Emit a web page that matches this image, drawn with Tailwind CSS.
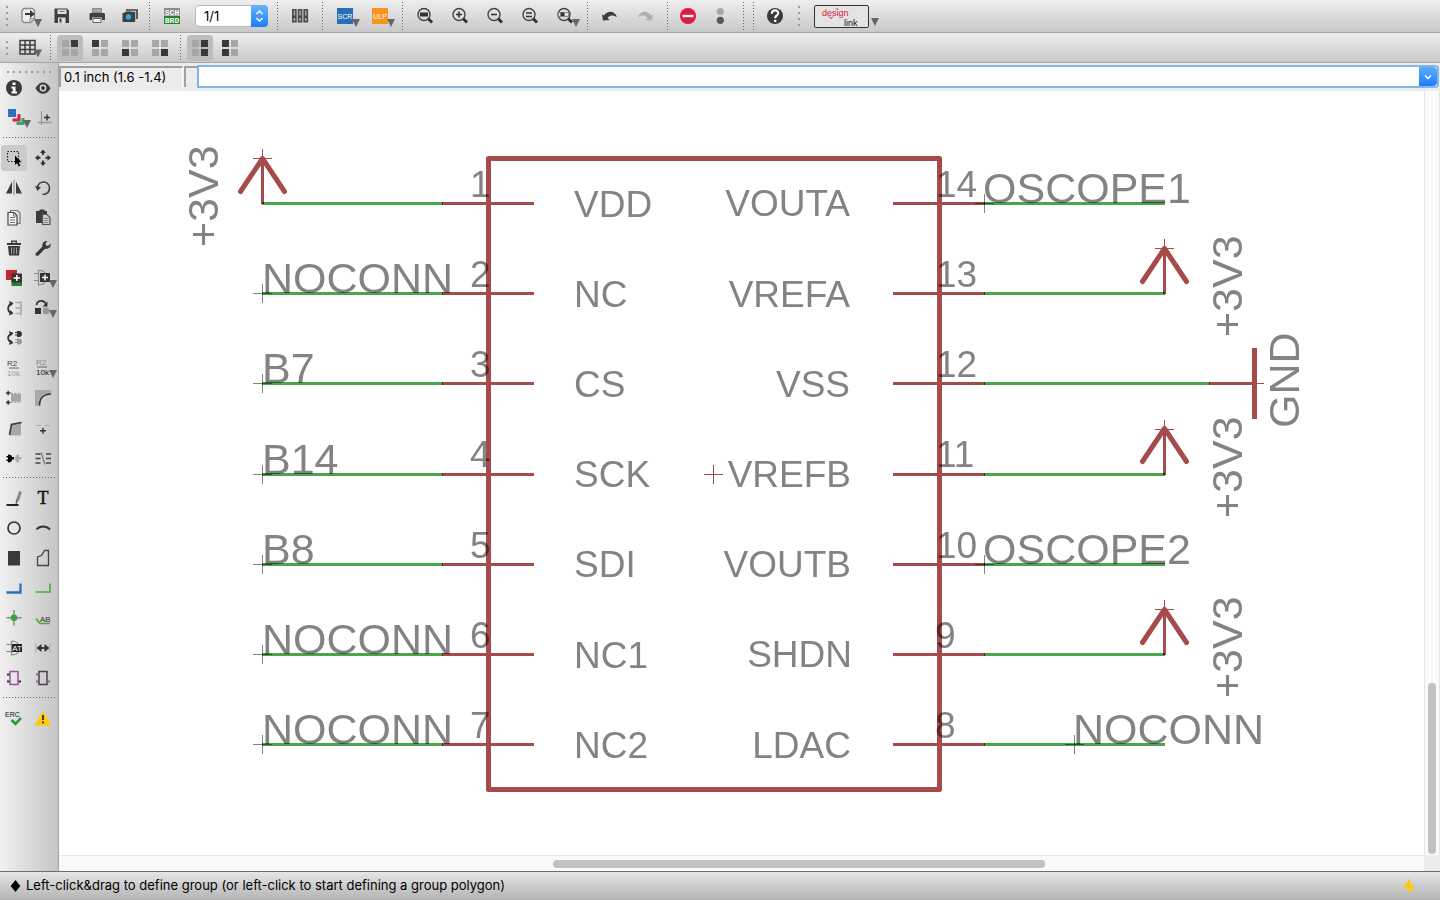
<!DOCTYPE html>
<html lang="en">
<head>
<meta charset="utf-8">
<title>Schematic editor</title>
<script src="https://cdn.jsdelivr.net/npm/@tailwindcss/browser@4"></script>
</head>
<body class="h-screen flex flex-col overflow-hidden bg-[#ececec] font-['Inter',sans-serif] text-black">

<!-- Main toolbar; every icon is drawn in the toolbar's own coordinate space -->
<header class="h-[33px] shrink-0 flex items-center border-b border-[#a5a5a5] bg-linear-to-b from-[#eeeeee] to-[#c9c9c9] [&_svg]:overflow-visible">
  <span class="w-[10px] ml-[2px] h-5 flex justify-center"><span class="w-[2px] h-full bg-[repeating-linear-gradient(#9a9a9a_0_2px,transparent_2px_6px)]"></span></span>
  <button aria-label="Open" class="w-[33px] h-7"><svg viewBox="12 2 33 28" class="w-full h-full"><path d="M24 8.500h8.500l2 2v8.500l-4 3.500H24l-2-2v-10z" fill="#eee" stroke="#888" stroke-width="1.300"/><path d="M30 22.500v-4h4.500" fill="#ccc" stroke="#999"/><path d="M25 13h5v-3l5 4-5 4v-3h-5z" fill="#3a3a3a"/><path d="M34 19h8l-4 8z" fill="#666"/></svg></button>
  <button aria-label="Save" class="w-[33px] h-7"><svg viewBox="45 2 33 28" class="w-full h-full"><path d="M55 8.500h12l2 2v12.500h-14.500v-14z" fill="#404040"/><path d="M57.500 9.500h9v4.500h-9zM58 17.500h7.500v5.500h-7.500z" fill="#e0e0e0"/><path d="M59.500 11.500h5" stroke="#777"/><path d="M59.500 18.500h2v4h-2z" fill="#404040"/></svg></button>
  <button aria-label="Print" class="w-[33px] h-7"><svg viewBox="78 2 33 28" class="w-full h-full"><path d="M92.500 8.500h9v4h-9z" fill="#aaa" stroke="#888"/><path d="M90 13h14l1 1v6h-3v-2.500h-10v2.500h-2.500v-6z" fill="#404040"/><path d="M93 18.500h8v4h-8z" fill="#f4f4f4" stroke="#666"/></svg></button>
  <button aria-label="Export image" class="w-[33px] h-7"><svg viewBox="111 2 33 28" class="w-full h-full"><path d="M126 10h11v9" fill="none" stroke="#404040" stroke-width="1.600"/><path d="M124.500 12.500h10v8" fill="none" stroke="#404040" stroke-width="1.500"/><path d="M122.500 13h3l1-1.500h4l1 1.500h3.500v9h-12.500z" fill="#404040"/><circle cx="128.500" cy="17" r="3.200" fill="#36a9e1" stroke="#222" stroke-width=".6"/></svg></button>
  <span class="w-[10px] h-7 flex justify-center"><span class="w-px h-full bg-[repeating-linear-gradient(#666_0_1px,transparent_1px_3px)]"></span></span>
  <button aria-label="Schematic or board" class="w-[35px] h-7"><svg viewBox="154 2 35 28" class="w-full h-full"><path d="M164 8h16v7.500h-16z" fill="#8a8a8a"/><path d="M164 16h16v8h-16z" fill="#23832b"/><g fill="#fff" font-family="Liberation Mono" font-weight="700" font-size="8" text-anchor="middle"><text x="172" y="14.500">SCH</text><text x="172" y="23">BRD</text></g></svg></button>
  <div class="relative w-[73px] h-[22px] ml-[6px] mr-1">
    <select aria-label="Sheet" class="block appearance-none w-full h-full rounded-sm border border-[#b9b9b9] bg-white pl-2 text-[13px] leading-none outline-none"><option>1/1</option></select>
    <svg viewBox="0 0 17 22" class="absolute right-0 top-0 w-[17px] h-[22px] pointer-events-none"><defs><linearGradient id="b" x2="0" y2="1"><stop stop-color="#69b3fb"/><stop offset="1" stop-color="#1a7dfb"/></linearGradient></defs><path d="M0 0h13a4 4 0 0 1 4 4v14a4 4 0 0 1-4 4H0z" fill="url(#b)"/><path d="M5.500 9l3-3 3 3M5.500 13l3 3 3-3" fill="none" stroke="#fff" stroke-width="1.500"/></svg>
  </div>
  <span class="w-[10px] h-7 flex justify-center"><span class="w-px h-full bg-[repeating-linear-gradient(#666_0_1px,transparent_1px_3px)]"></span></span>
  <button aria-label="Library" class="w-[35px] h-7"><svg viewBox="282 2 35 28" class="w-full h-full"><path d="M292 9h4.700v13.500h-4.700zM297.700 9h4.700v13.500h-4.700zM303.400 9h4.700v13.500h-4.700z" fill="#4a4a4a"/><path d="M293.600 10.500h1.500v5h-1.500zM299.300 10.500h1.500v5h-1.500zM305 10.500h1.500v5h-1.500z" fill="#aaa"/><path d="M293.600 18.500h1.500v2h-1.500zM299.300 18.500h1.500v2h-1.500zM305 18.500h1.500v2h-1.500z" fill="#ddd"/></svg></button>
  <span class="w-[10px] h-7 flex justify-center"><span class="w-px h-full bg-[repeating-linear-gradient(#666_0_1px,transparent_1px_3px)]"></span></span>
  <button aria-label="Run script" class="w-[35px] h-7"><svg viewBox="327 2 35 28" class="w-full h-full"><path d="M337 8h16v16h-16z" fill="#2a6fb5"/><text x="345" y="18.500" fill="#fff" font-family="Liberation Sans" font-size="7" text-anchor="middle">SCR</text><path d="M352 19h8l-4 8z" fill="#666"/></svg></button>
  <button aria-label="Run ULP" class="w-[35px] h-7"><svg viewBox="362 2 35 28" class="w-full h-full"><path d="M372 8h16v16h-16z" fill="#f7941d"/><text x="380" y="18.500" fill="#fff" font-family="Liberation Sans" font-size="7" text-anchor="middle">ULP</text><path d="M387 19h8l-4 8z" fill="#666"/></svg></button>
  <span class="w-[10px] h-7 flex justify-center"><span class="w-px h-full bg-[repeating-linear-gradient(#666_0_1px,transparent_1px_3px)]"></span></span>
  <button aria-label="Fit" class="w-[35px] h-7"><svg viewBox="407 2 35 28" class="w-full h-full"><circle cx="424" cy="14.500" r="6" fill="none" stroke="#444" stroke-width="1.400"/><path d="M428 18.500l4 4" stroke="#333" stroke-width="3"/><path d="M420 12.500h8v4h-8z" fill="#333"/></svg></button>
  <button aria-label="Zoom in" class="w-[35px] h-7"><svg viewBox="442 2 35 28" class="w-full h-full"><circle cx="459" cy="14.500" r="6" fill="none" stroke="#444" stroke-width="1.400"/><path d="M463 18.500l4 4" stroke="#333" stroke-width="3"/><path d="M456 14.500h6M459 11.500v6" stroke="#333" stroke-width="1.600"/></svg></button>
  <button aria-label="Zoom out" class="w-[35px] h-7"><svg viewBox="477 2 35 28" class="w-full h-full"><circle cx="494" cy="14.500" r="6" fill="none" stroke="#444" stroke-width="1.400"/><path d="M498 18.500l4 4" stroke="#333" stroke-width="3"/><path d="M491 14.500h6" stroke="#333" stroke-width="1.600"/></svg></button>
  <button aria-label="Redraw" class="w-[35px] h-7"><svg viewBox="512 2 35 28" class="w-full h-full"><circle cx="529" cy="14.500" r="6" fill="none" stroke="#444" stroke-width="1.400"/><path d="M533 18.500l4 4" stroke="#333" stroke-width="3"/><path d="M526 13h6M526 16.500h6" stroke="#333" stroke-width="1.500"/></svg></button>
  <button aria-label="Zoom select" class="w-[35px] h-7"><svg viewBox="547 2 35 28" class="w-full h-full"><circle cx="564" cy="14.500" r="6" fill="none" stroke="#444" stroke-width="1.400"/><path d="M568 18.500l4 4" stroke="#333" stroke-width="3"/><path d="M558.500 12.500h10v4h-10z" fill="none" stroke="#888"/><path d="M560.500 12.500h4v3.500h-4z" fill="#333"/><path d="M572 19h8l-4 8z" fill="#666"/></svg></button>
  <span class="w-[10px] h-7 flex justify-center"><span class="w-px h-full bg-[repeating-linear-gradient(#666_0_1px,transparent_1px_3px)]"></span></span>
  <button aria-label="Undo" class="w-[35px] h-7"><svg viewBox="592 2 35 28" class="w-full h-full"><path d="M602 14.500l1 6 6.500-.5-2-2c2-3 5-3.500 9.500-1-2-6-9-7.500-13-1.500z" fill="#3c3c3c"/></svg></button>
  <button aria-label="Redo" class="w-[35px] h-7"><svg viewBox="627 2 35 28" class="w-full h-full"><path d="M653 14.500l-1 6-6.500-.5 2-2c-2-3-5-3.500-9.500-1 2-6 9-7.500 13-1.500z" fill="#b0b0b0"/></svg></button>
  <span class="w-[10px] h-7 flex justify-center"><span class="w-px h-full bg-[repeating-linear-gradient(#666_0_1px,transparent_1px_3px)]"></span></span>
  <button aria-label="Stop" class="w-[33px] h-7"><svg viewBox="672 2 33 28" class="w-full h-full"><circle cx="688" cy="16" r="8" fill="#de1c3c"/><path d="M682.500 14.800h11v2.400h-11z" fill="#fff"/></svg></button>
  <button aria-label="Go" class="w-[33px] h-7"><svg viewBox="705 2 33 28" class="w-full h-full"><circle cx="720.300" cy="11.500" r="3.600" fill="#aaa7a7"/><circle cx="720.300" cy="20.300" r="3.600" fill="#585858"/></svg></button>
  <span class="w-[10px] h-7 flex justify-center"><span class="w-px h-full bg-[repeating-linear-gradient(#666_0_1px,transparent_1px_3px)]"></span></span>
  <span class="w-[10px] h-7 flex justify-center"><span class="w-px h-full bg-[repeating-linear-gradient(#666_0_1px,transparent_1px_3px)]"></span></span>
  <button aria-label="Help" class="w-[35px] h-7"><svg viewBox="758 2 35 28" class="w-full h-full"><circle cx="775" cy="16" r="8" fill="#3a3a3a"/><path d="M771.800 13.800c0-4.600 6.600-4.200 6.400-.6-.1 2.200-3 2.300-3 5" fill="none" stroke="#fff" stroke-width="2.200"/><path d="M774 19.800h2.400v2.200h-2.400z" fill="#fff"/></svg></button>
  <span class="w-3 h-5 flex justify-center"><span class="w-[2px] h-full bg-[repeating-linear-gradient(#9a9a9a_0_2px,transparent_2px_6px)]"></span></span>
  <button aria-label="Design link" class="w-[68px] h-7 ml-[7px]"><svg viewBox="812 2 68 28" class="w-full h-full"><rect x="814.500" y="5.500" width="54" height="22" rx="1.500" fill="#e3e3e3" stroke="#333"/><g font-family="Liberation Sans" font-size="9"><text x="822" y="16" fill="#d8163c">design</text><text x="844" y="26" fill="#111">link</text></g><path d="M829 16.500l2 2 2-2M836 9.500l1-1 1 1" fill="none" stroke="#d8163c"/><path d="M871 18h8l-4 8z" fill="#666"/></svg></button>
</header>

<div class="h-[30px] shrink-0 flex items-center border-b border-[#a5a5a5] bg-linear-to-b from-[#eeeeee] to-[#c9c9c9]">
  <span class="w-[10px] ml-[2px] h-[14px] flex justify-center"><span class="w-[2px] h-full bg-[repeating-linear-gradient(#9a9a9a_0_2px,transparent_2px_6px)]"></span></span>
  <button aria-label="Grid" class="w-[33px] h-[26px]"><svg viewBox="12 35 33 26" class="w-full h-full"><path d="M20 40.500h15v13.500h-15zM25 40v14M30 40v14M20 45h15M20 49.500h15" fill="none" stroke="#404040" stroke-width="1.500"/><path d="M34 49.500h8l-4 8z" fill="#666"/></svg></button>
  <span class="w-[10px] h-[26px] flex justify-center"><span class="w-px h-full bg-[repeating-linear-gradient(#666_0_1px,transparent_1px_3px)]"></span></span>
  <button aria-label="Layer preset 1" class="w-[26px] mx-[2px] h-[26px] rounded-t bg-[#bdbdbd]"><svg viewBox="0 0 26 26" class="w-full h-full"><path d="M5 5h7v7H5zM5 14h7v7H5zM14 14h7v7h-7z" fill="#aaa5a5"/><path d="M14 5h7v7h-7z" fill="#3a3a3a"/></svg></button>
  <button aria-label="Layer preset 2" class="w-[26px] mx-[2px] h-[26px]"><svg viewBox="0 0 26 26" class="w-full h-full"><path d="M14 5h7v7h-7zM5 14h7v7H5zM14 14h7v7h-7z" fill="#aaa5a5"/><path d="M5 5h7v7H5z" fill="#3a3a3a"/></svg></button>
  <button aria-label="Layer preset 3" class="w-[26px] mx-[2px] h-[26px]"><svg viewBox="0 0 26 26" class="w-full h-full"><path d="M5 5h7v7H5zM14 5h7v7h-7zM14 14h7v7h-7z" fill="#aaa5a5"/><path d="M5 14h7v7H5z" fill="#3a3a3a"/></svg></button>
  <button aria-label="Layer preset 4" class="w-[26px] mx-[2px] h-[26px]"><svg viewBox="0 0 26 26" class="w-full h-full"><path d="M5 5h7v7H5zM14 5h7v7h-7zM5 14h7v7H5z" fill="#aaa5a5"/><path d="M14 14h7v7h-7z" fill="#3a3a3a"/></svg></button>
  <span class="w-[10px] h-[26px] flex justify-center"><span class="w-px h-full bg-[repeating-linear-gradient(#666_0_1px,transparent_1px_3px)]"></span></span>
  <button aria-label="Right pair" class="w-[26px] mx-[2px] h-[26px] rounded-t bg-[#bdbdbd]"><svg viewBox="0 0 26 26" class="w-full h-full"><path d="M5 5h7v7H5zM5 14h7v7H5z" fill="#aaa5a5"/><path d="M14 5h7v7h-7zM14 14h7v7h-7z" fill="#3a3a3a"/></svg></button>
  <button aria-label="Left pair" class="w-[26px] mx-[2px] h-[26px]"><svg viewBox="0 0 26 26" class="w-full h-full"><path d="M14 5h7v7h-7zM14 14h7v7h-7z" fill="#aaa5a5"/><path d="M5 5h7v7H5zM5 14h7v7H5z" fill="#3a3a3a"/></svg></button>
</div>

<div class="flex-1 min-h-0 flex">
  <!-- Tool palette -->
  <aside class="w-[59px] shrink-0 border-r border-[#a5a5a5] bg-linear-to-r from-[#f0f0f0] to-[#c6c6c6] [&_svg]:overflow-visible">
    <div class="h-[10px] px-[7px] pt-2"><div class="h-[2px] bg-[repeating-linear-gradient(90deg,#9a9a9a_0_2px,transparent_2px_6px)]"></div></div>
    <div class="grid grid-cols-2 auto-rows-[30px]">
      <button aria-label="Info"><svg viewBox="0 73 29 30" class="w-full h-full"><circle cx="14" cy="88" r="8" fill="#3a3a3a"/><path d="M12.500 82.500h3v2.500h-3zM11.500 86.500h4v5h1.500v2h-5.500v-2h1.300v-3h-1.300z" fill="#fff"/></svg></button>
      <button aria-label="Show"><svg viewBox="29 73 29 30" class="w-full h-full"><path d="M35.500 88.200c4-7.500 11-7.500 15 0-4 7.500-11 7.500-15 0z" fill="#3a3a3a"/><circle cx="43" cy="88" r="3.400" fill="#ddd"/><circle cx="43" cy="88" r="1.900" fill="#333"/></svg></button>
      <button aria-label="Display"><svg viewBox="0 103 29 30" class="w-full h-full"><path d="M8 109h8v8H8z" fill="#2b72ba"/><path d="M17.500 114h3v7.500h-8v-3h5z" fill="#de1c50"/><path d="M21.500 118h3v7h-8v-3h5z" fill="#2eaa63"/><path d="M23 120h8l-4 8z" fill="#666"/></svg></button>
      <button aria-label="Mark"><svg viewBox="29 103 29 30" class="w-full h-full"><path d="M41.500 111v14M38 122.500h14" stroke="#999" fill="none" stroke-width="1.300"/><path d="M44 117.500h6M47 114.500v6" stroke="#333" stroke-width="1.400"/></svg></button>
    </div>
    <div class="h-[10px] pt-[4px] px-[3px]"><div class="h-px bg-[repeating-linear-gradient(90deg,#666_0_1px,transparent_1px_3px)]"></div></div>
    <div class="grid grid-cols-2 auto-rows-[30px]">
      <button aria-label="Group"><svg viewBox="0 143 29 30" class="w-full h-full"><rect x="1" y="145" width="26" height="26" rx="3" fill="#cbcbcb"/><path d="M7.500 151.500h11v10h-11z" fill="none" stroke="#222" stroke-width="1.200" stroke-dasharray="1.500 1.500"/><path d="M15 155.500l6.500 6.500-2.800.4 1.600 3.400-1.600.8-1.600-3.500-2.100 2z" fill="#000"/></svg></button>
      <button aria-label="Move"><svg viewBox="29 143 29 30" class="w-full h-full"><path d="M43 149.500l3 3.500h-2v2h-2v-2h-2zM43 166l3-3.500h-2v-2h-2v2h-2zM35 157.800l3.500-3v2h2v2h-2v2zM51 157.800l-3.500-3v2h-2v2h2v2z" fill="#333"/></svg></button>
      <button aria-label="Mirror"><svg viewBox="0 173 29 30" class="w-full h-full"><path d="M12 181.500v12H6zM16 181.500v12h6z" fill="#3c3c3c"/><path d="M14 180v15" stroke="#999" stroke-width="1.300"/></svg></button>
      <button aria-label="Rotate"><svg viewBox="29 173 29 30" class="w-full h-full"><path d="M37.500 187.500c1-7.500 11.500-7.500 12 .5 0 5-3.500 6.500-7 6.500" fill="none" stroke="#3c3c3c" stroke-width="1.600"/><path d="M35 186l6 1-3.500 4z" fill="#3c3c3c"/></svg></button>
      <button aria-label="Copy"><svg viewBox="0 203 29 30" class="w-full h-full"><path d="M10.500 213v-2.500h7l2.500 2.500v10.500h-3" fill="none" stroke="#777" stroke-width="1.200"/><path d="M8 212.500h6l3 3v9.500H8z" fill="#f2f2f2" stroke="#444" stroke-width="1.200"/><path d="M10 217.500h5M10 220h5M10 222.500h5M13.500 212.500v3.500h3" stroke="#777" fill="none"/></svg></button>
      <button aria-label="Paste"><svg viewBox="29 203 29 30" class="w-full h-full"><path d="M36 211h3l1-1.500h4l1 1.500h2v3h-5v9h-6z" fill="#3c3c3c"/><path d="M42.500 214.500h4.500l3 3v7h-7.500z" fill="#ccc" stroke="#555" stroke-width="1.200"/><path d="M44 218.500h4.500M44 220.500h4.500M44 222.500h4.500" stroke="#888"/></svg></button>
      <button aria-label="Delete"><svg viewBox="0 233 29 30" class="w-full h-full"><path d="M7 243h4v-2.500h6v2.500h4v2H7zM8 246h12l-1 9.500H9z" fill="#3a3a3a"/><path d="M12.500 241.800h3v1.200h-3z" fill="#e5e5e5"/><path d="M11.500 247.500v6.500M14 247.500v6.500M16.500 247.500v6.500" stroke="#aaa" stroke-width=".9"/></svg></button>
      <button aria-label="Change"><svg viewBox="29 233 29 30" class="w-full h-full"><path d="M36 253l6.500-6.500c-.8-3.500 1.500-6 5-5.500l-2 2.500.5 2 2 .5 2.500-2.500c1 3.500-2 6-5.500 5.300L38.500 255.500c-1.800 1-4-.9-2.500-2.500z" fill="#3a3a3a"/></svg></button>
      <button aria-label="Add"><svg viewBox="0 263 29 30" class="w-full h-full"><path d="M6 270h11v10H6z" fill="#c0282f"/><path d="M11.500 279h10.500v7H11.500z" fill="#23832b"/><path d="M11.500 273.500h10.500v9H11.500z" fill="#333"/><path d="M13.500 278h6.500M16.800 275v6" stroke="#fff" stroke-width="1.500"/></svg></button>
      <button aria-label="Add gate"><svg viewBox="29 263 29 30" class="w-full h-full"><path d="M34 273.500h4.500M34 280.500h4.500M38.500 270v15c5 0 7.500-3 7.500-7.500s-2.500-7.500-7.500-7.500" fill="none" stroke="#888" stroke-width="1.200"/><path d="M40 273h10v9h-10z" fill="#333"/><path d="M42 277.500h6M45 274.500v6" stroke="#fff" stroke-width="1.500"/><path d="M49 280h8l-4 8z" fill="#666"/></svg></button>
      <button aria-label="Pinswap"><svg viewBox="0 293 29 30" class="w-full h-full"><path d="M11.500 303.500c-4.500 2-4.500 8 0 10" fill="none" stroke="#333" stroke-width="1.700"/><path d="M9 301l4.500 2-3 3.500zM9 315.500l4.500-2-3-3.500z" fill="#333"/><path d="M15.500 302.500h6M15.500 308h6M15.500 313.500h6M21 301v14.500" fill="none" stroke="#aaa" stroke-width="1.600"/></svg></button>
      <button aria-label="Replace"><svg viewBox="29 293 29 30" class="w-full h-full"><path d="M36.500 305c1-5.500 7.500-5 9-1.500" fill="none" stroke="#333" stroke-width="1.700"/><path d="M47.500 301.500v5h-5z" fill="#333"/><path d="M35 308h6v6h-6z" fill="#333"/><circle cx="46" cy="311" r="3.400" fill="#999"/><path d="M49 310h8l-4 8z" fill="#666"/></svg></button>
      <button aria-label="Gateswap"><svg viewBox="0 323 29 30" class="w-full h-full"><path d="M11.500 333.500c-4.500 2-4.500 7 0 9" fill="none" stroke="#333" stroke-width="1.700"/><path d="M9 331l4.500 2-3 3.500zM9 345l4.500-2-3-3.500z" fill="#333"/><path d="M17 331h2c4 0 4 6 0 6h-2v-1.500h-2v-1h2v-1.500h-2v-1h2z" fill="#333"/><path d="M17 338.500h2c4 0 4 6 0 6h-2V343h-2v-1h2v-1.500h-2v-1h2z" fill="#999"/></svg></button>
      <span></span>
      <button aria-label="Name"><svg viewBox="0 353 29 30" class="w-full h-full"><g font-family="Liberation Sans" font-size="8"><text x="7" y="366" fill="#444">R2</text><text x="7" y="376" fill="#999">10k</text></g><path d="M9 368h10" stroke="#666"/></svg></button>
      <button aria-label="Value"><svg viewBox="29 353 29 30" class="w-full h-full"><g font-family="Liberation Sans" font-size="8"><text x="36" y="365" fill="#888">R2</text><text x="36" y="375" fill="#111">10k</text></g><path d="M37 367h10" stroke="#666"/><path d="M49 370h8l-4 8z" fill="#666"/></svg></button>
      <button aria-label="Smash"><svg viewBox="0 383 29 30" class="w-full h-full"><path d="M6 393h4.500M8.200 390.800v4.500M6 402.500h4.500M8.200 400.200v4.500" stroke="#333" stroke-width="1.400"/><path d="M11 394h10v7.500H11z" fill="#a8a5a5"/><path d="M11 393.500h10M11 402h10" stroke="#a8a5a5" stroke-width="1.500" stroke-dasharray="2 1.300"/></svg></button>
      <button aria-label="Miter"><svg viewBox="29 383 29 30" class="w-full h-full"><path d="M35 390h16v4H44l-4.500 5v7H35z" fill="#aaa7a7"/><path d="M39.500 405.500c0-7 4-11.500 11.500-11.500" fill="none" stroke="#333" stroke-width="1.600"/></svg></button>
      <button aria-label="Split"><svg viewBox="0 413 29 30" class="w-full h-full"><path d="M12.500 424l8.500-1.500v13H10z" fill="#aaa7a7"/><path d="M9.500 435l2-10.500 10-2" fill="none" stroke="#3a3a3a" stroke-width="1.700"/></svg></button>
      <button aria-label="Invoke"><svg viewBox="29 413 29 30" class="w-full h-full"><path d="M36 425.500h5.500M44.500 425.500h5.500" stroke="#aaa"/><path d="M40 430.800h6M43 427.800v6" stroke="#333" stroke-width="1.400"/></svg></button>
      <button aria-label="Optimize"><svg viewBox="0 443 29 30" class="w-full h-full"><path d="M8 454.500c3 0 4 1 4 2.500h2v2.500h-2c0 2-1 3-4 3V461H6.500v-1.500H8v-2H6.500V456H8z" fill="#000"/><path d="M19 454.500c-3 0-4 2-4 4s1 4 4 4V459.500h2.500v-2.500H19z" fill="#aaa"/></svg></button>
      <button aria-label="Net breakout"><svg viewBox="29 443 29 30" class="w-full h-full"><path d="M35.500 454h5M35.500 458.500h5M35.500 463h5M46 454h5M46 458.500h5M46 463h5" stroke="#444" stroke-width="1.500"/><path d="M41 452.500l4 12" stroke="#777" stroke-width="1.200"/></svg></button>
    </div>
    <div class="h-[10px] pt-[4px] px-[3px]"><div class="h-px bg-[repeating-linear-gradient(90deg,#666_0_1px,transparent_1px_3px)]"></div></div>
    <div class="grid grid-cols-2 auto-rows-[30px]">
      <button aria-label="Line"><svg viewBox="0 483 29 30" class="w-full h-full"><path d="M6.500 505h12" stroke="#000" stroke-width="1.700"/><path d="M20.500 491.500l-3 9" stroke="#888" stroke-width="3"/><path d="M17 500l-.8 3.500" stroke="#555" stroke-width="1.500"/></svg></button>
      <button aria-label="Text"><svg viewBox="29 483 29 30" class="w-full h-full"><text x="43" y="504" font-family="Liberation Serif" font-size="18" text-anchor="middle" fill="#111" stroke="#111" stroke-width=".4">T</text></svg></button>
      <button aria-label="Circle"><svg viewBox="0 513 29 30" class="w-full h-full"><circle cx="14" cy="528" r="6" fill="none" stroke="#333" stroke-width="1.700"/></svg></button>
      <button aria-label="Arc"><svg viewBox="29 513 29 30" class="w-full h-full"><path d="M36.500 529.500c3.500-4 9.500-4 13.500 0" fill="none" stroke="#333" stroke-width="1.800"/></svg></button>
      <button aria-label="Rectangle"><svg viewBox="0 543 29 30" class="w-full h-full"><path d="M8 551h12v14.500H8z" fill="#3a3a3a"/></svg></button>
      <button aria-label="Polygon"><svg viewBox="29 543 29 30" class="w-full h-full"><path d="M37.500 565.500v-8.500l4-1.500 3-5h4v15z" fill="none" stroke="#444" stroke-width="1.300"/></svg></button>
      <button aria-label="Bus"><svg viewBox="0 573 29 30" class="w-full h-full"><path d="M6.500 592.500H20.500V583.500" fill="none" stroke="#2b72ba" stroke-width="2.300"/></svg></button>
      <button aria-label="Net"><svg viewBox="29 573 29 30" class="w-full h-full"><path d="M35.500 592H50V583.500" fill="none" stroke="#43a83a" stroke-width="1.600"/></svg></button>
      <button aria-label="Junction"><svg viewBox="0 603 29 30" class="w-full h-full"><path d="M6.500 617.800h15M14 610v15.500" stroke="#888" stroke-width="1.500"/><circle cx="14" cy="617.800" r="3.300" fill="#3aa535"/></svg></button>
      <button aria-label="Label"><svg viewBox="29 603 29 30" class="w-full h-full"><path d="M36 618.500l4 5h10" fill="none" stroke="#43a83a" stroke-width="1.600"/><text x="40" y="621.500" font-family="Liberation Sans" font-size="8" fill="#333">AB</text></svg></button>
      <button aria-label="Attribute"><svg viewBox="0 633 29 30" class="w-full h-full"><path d="M6 644.500h5M6 651.500h5M11.500 641v14c5 0 8-3 8-7s-3-7-8-7" fill="none" stroke="#888" stroke-width="1.200"/><path d="M12 644h10v8H12z" fill="#222"/><text x="17" y="651" font-family="Liberation Sans" font-size="8" text-anchor="middle" fill="#fff">AT</text></svg></button>
      <button aria-label="Dimension"><svg viewBox="29 633 29 30" class="w-full h-full"><path d="M36 643v10M50 643v10" stroke="#aaa"/><path d="M39 648h8" stroke="#333" stroke-width="1.800"/><path d="M36.500 648l5-4v8zM49.500 648l-5-4v8z" fill="#333"/></svg></button>
      <button aria-label="Module"><svg viewBox="0 663 29 30" class="w-full h-full"><path d="M10 671.500h8v13h-8z" fill="none" stroke="#a050a8" stroke-width="1.500"/><path d="M7 674.500h2.500M7 681.500h2.500M18.500 681.500H21" stroke="#333" stroke-width="1.800"/></svg></button>
      <button aria-label="Port"><svg viewBox="29 663 29 30" class="w-full h-full"><path d="M39 671.500h8v13h-8z" fill="none" stroke="#444" stroke-width="1.500"/><path d="M36 674.500h2.500M36 681.500h2.500M47.500 681.500H50" stroke="#a050a8" stroke-width="1.800"/></svg></button>
    </div>
    <div class="h-[10px] pt-[4px] px-[3px]"><div class="h-px bg-[repeating-linear-gradient(90deg,#666_0_1px,transparent_1px_3px)]"></div></div>
    <div class="grid grid-cols-2 auto-rows-[30px]">
      <button aria-label="ERC"><svg viewBox="0 703 29 30" class="w-full h-full"><text x="5" y="716.500" font-family="Liberation Sans" font-size="7" fill="#111">ERC</text><path d="M11.500 720l4 3.800 5.500-6" fill="none" stroke="#2f9a35" stroke-width="2.700"/></svg></button>
      <button aria-label="Errors"><svg viewBox="29 703 29 30" class="w-full h-full"><path d="M43 711.500l7.500 13.500h-15z" fill="#ffcb05" stroke="#ffcb05" stroke-linejoin="round"/><path d="M43 715v5M43 721.500v2" stroke="#333" stroke-width="1.800"/></svg></button>
    </div>
  </aside>

  <main class="flex-1 min-w-0 flex flex-col">
    <div class="h-7 shrink-0 flex items-center pr-px pb-px">
      <output class="w-[124px] h-[21px] border-t-2 border-l-2 border-[#a0a0a0] border-r border-r-white pl-[3px] text-[13px] leading-[18px] whitespace-nowrap">0.1 inch (1.6 -1.4)</output>
      <span class="w-[13px] h-[21px] ml-px border-t-2 border-l-2 border-[#a0a0a0]"></span>
      <div class="flex-1 flex h-[23px] rounded-r border-2 border-[#85b5e6] bg-white">
        <input type="text" aria-label="Command" class="flex-1 min-w-0 px-1 text-[13px] outline-none bg-white">
        <button aria-label="Command history" class="w-[18px] bg-linear-to-b from-[#5dabf9] to-[#1a7dfb] rounded-r-sm"><svg viewBox="0 0 18 19" class="w-full h-full"><path d="M6 8.500l3 3 3-3" fill="none" stroke="#fff" stroke-width="1.500"/></svg></button>
      </div>
    </div>
    <div class="flex-1 min-h-0 grid grid-cols-[1fr_16px] grid-rows-[1fr_16px]">
      <!-- Schematic sheet -->
      <svg viewBox="59 91 1365 764" class="w-full h-full min-h-0 bg-white isolate" role="img" aria-label="Schematic">
        <g fill="#838383" font-family="Liberation Sans, Arial, sans-serif">
          <g font-size="43">
            <text x="262" y="293">NOCONN</text><text x="262" y="383">B7</text><text x="262" y="474">B14</text><text x="262" y="564">B8</text><text x="262" y="654">NOCONN</text><text x="262" y="744">NOCONN</text>
            <text x="983" y="203">OSCOPE1</text><text x="983" y="564">OSCOPE2</text><text x="1073" y="744">NOCONN</text>
            <text transform="translate(218 247) rotate(-90)">+3V3</text>
            <text transform="translate(1242 337) rotate(-90)">+3V3</text>
            <text transform="translate(1242 518) rotate(-90)">+3V3</text>
            <text transform="translate(1242 698) rotate(-90)">+3V3</text>
            <text transform="translate(1299 428) rotate(-90)">GND</text>
          </g>
          <g font-size="37">
            <text x="574" y="217">VDD</text><text x="574" y="307">NC</text><text x="574" y="397">CS</text><text x="574" y="487">SCK</text><text x="574" y="577">SDI</text><text x="574" y="668">NC1</text><text x="574" y="758">NC2</text>
            <g text-anchor="end"><text x="850" y="216">VOUTA</text><text x="850" y="307">VREFA</text><text x="850" y="397">VSS</text><text x="851" y="487">VREFB</text><text x="851" y="577">VOUTB</text><text x="852" y="667">SHDN</text><text x="851" y="758">LDAC</text></g>
            <text x="470" y="197">1</text><text x="470" y="287">2</text><text x="470" y="377">3</text><text x="470" y="467">4</text><text x="470" y="558">5</text><text x="470" y="648">6</text><text x="470" y="738">7</text>
            <text x="936" y="197">14</text><text x="936" y="287">13</text><text x="936" y="377">12</text><text x="936" y="467">11</text><text x="936" y="558">10</text><text x="935" y="648">9</text><text x="935" y="738">8</text>
          </g>
          <path d="M253 293.500h19M262.500 284v19M253 383.500h19M262.500 374v19M253 474.500h19M262.500 465v19M253 564.500h19M262.500 555v19M253 654.500h19M262.500 645v19M253 744.500h19M262.500 735v19M975 203.500h19M984.500 194v19M975 564.500h19M984.500 555v19M1065 744.500h19M1074.500 735v19" stroke="#838383" shape-rendering="crispEdges"/>
        </g>
        <g fill="none" stroke="#a54b4b" class="mix-blend-multiply">
          <path d="M488.500 158.500h451v631h-451z" stroke-width="5" stroke-linejoin="round"/>
          <path d="M442 203.500h92M442 293.500h92M442 383.500h92M442 474.500h92M442 564.500h92M442 654.500h92M442 744.500h92M893 203.500h92M893 293.500h92M893 383.500h92M893 474.500h92M893 564.500h92M893 654.500h92M893 744.500h92M1209 383.500h45M262.500 158v46M1164.500 248v46M1164.500 429v46M1164.500 609v46" stroke-width="3"/>
          <path d="M240.500 191.500l22-33 22 33M1142.500 281.500l22-33 22 33M1142.500 461.500l22-33 22 33M1142.500 642.500l22-33 22 33" stroke-width="5" stroke-linejoin="round" stroke-linecap="round"/>
          <path d="M1254.500 348v71" stroke-width="5"/>
          <path d="M253 158.500h19M262.500 149v19M1155 248.500h19M1164.500 239v19M1155 429.500h19M1164.500 420v19M1155 609.500h19M1164.500 600v19M1245 383.500h19M704 474.500h19M713.500 465v19"/>
        </g>
        <path d="M262 203.500h181M262 293.500h181M262 383.500h181M262 474.500h181M262 564.500h181M262 654.500h181M262 744.500h181M984 203.500h181M984 293.500h181M984 383.500h226M984 474.500h181M984 564.500h181M984 654.500h181M984 744.500h181" stroke="#4ba54b" stroke-width="3" class="mix-blend-multiply"/>
      </svg>
      <div class="border-x border-[#e6e6e6] bg-[#fafafa] flex flex-col items-center justify-end pb-px"><div class="w-2 h-[171px] rounded-full bg-[#c1c1c1]"></div></div>
      <div class="border-t border-[#e6e6e6] bg-[#fafafa] flex items-center"><div class="w-[36%] h-2 ml-[36.2%] rounded-full bg-[#c1c1c1]"></div></div>
      <div></div>
    </div>
  </main>
</div>

<footer class="h-[29px] shrink-0 flex items-center border-t border-[#6e6e6e] bg-linear-to-b from-[#e6e6e6] to-[#b4b4b4] pl-[10px] pr-[24px] text-[13px]">
  <svg viewBox="0 0 11 14" class="w-[11px] h-[14px]"><path d="M5.500 1l4.800 6-4.800 6L.7 7z"/></svg>
  <span class="ml-[5px] flex-1">Left-click&amp;drag to define group (or left-click to start defining a group polygon)</span>
  <svg viewBox="0 0 14 16" class="w-[14px] h-4"><path d="M8 0L1 9.500l5.500.5L7.500 16 13 7l-5-.5z" fill="#ffc907"/></svg>
</footer>
</body>
</html>
